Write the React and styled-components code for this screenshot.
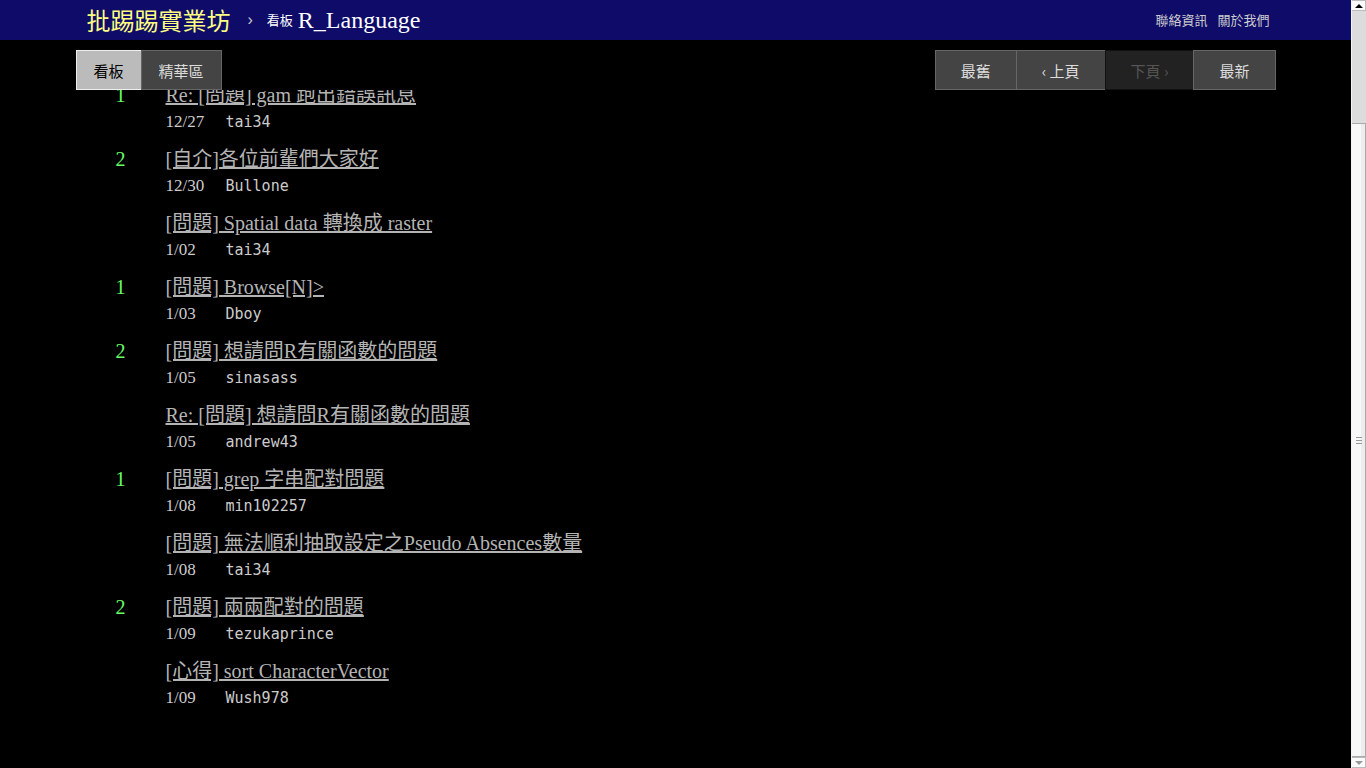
import React from "react";
import styled, { createGlobalStyle } from "styled-components";

const GlobalStyle = createGlobalStyle`
  body {
    margin: 0 15px 0 0;
    background: #000;
    color: #ccc;
    font-family: "Liberation Serif", "Noto Sans CJK TC", serif;
  }
`;

const TopbarContainer = styled.div`
  position: fixed;
  top: 0;
  left: 0;
  right: 15px;
  height: 40px;
  background: #0e0b69;
  z-index: 10;
`;

const Topbar = styled.div`
  max-width: 1200px;
  margin: 0 auto;
  height: 40px;
  padding: 0 6px 0 11px;
  box-sizing: border-box;
  display: flex;
  align-items: center;
  line-height: 40px;
`;

const Logo = styled.a`
  font-family: "Noto Sans CJK TC", sans-serif;
  font-size: 24px;
  color: #ffff80;
  text-decoration: none;
`;

const Sep = styled.span`
  color: #ccc;
  font-family: "Liberation Sans", sans-serif;
  font-size: 16px;
  margin: 0 14px 0 17px;
`;

const BoardLabel = styled.span`
  font-family: "Noto Sans CJK TC", sans-serif;
  font-size: 13px;
  color: #fff;
  margin-right: 5px;
`;

const BoardName = styled.a`
  font-family: "Liberation Serif", serif;
  font-size: 24px;
  color: #fff;
  text-decoration: none;
`;

const RightLinks = styled.div`
  margin-left: auto;
  display: flex;
  gap: 10px;
`;

const TopLink = styled.a`
  font-family: "Noto Sans CJK TC", sans-serif;
  font-size: 13px;
  color: #ccc;
  text-decoration: none;
`;

const ActionBarContainer = styled.div`
  position: fixed;
  top: 40px;
  left: 0;
  right: 15px;
  height: 50px;
  background: #000;
  z-index: 9;
`;

const ActionBar = styled.div`
  max-width: 1200px;
  margin: 0 auto;
  padding-top: 10px;
  display: flex;
  justify-content: space-between;
`;

const BtnGroup = styled.div`
  display: flex;
`;

const Btn = styled.a`
  display: flex;
  align-items: center;
  justify-content: center;
  height: 40px;
  box-sizing: border-box;
  padding: 0 ${({ $pad }) => $pad}px;
  font-family: "Noto Sans CJK TC", sans-serif;
  font-size: 15px;
  white-space: nowrap;
  border: 1px solid
    ${({ $state }) =>
      $state === "selected" ? "#eee" : $state === "disabled" ? "#111" : "#666"};
  background: ${({ $state }) =>
    $state === "selected" ? "#bbb" : $state === "disabled" ? "#222" : "#444"};
  color: ${({ $state }) =>
    $state === "selected" ? "#000" : $state === "disabled" ? "#555" : "#ddd"};
  & + & {
    margin-left: -1px;
  }
`;

const Main = styled.div`
  max-width: 1200px;
  margin: 0 auto;
  padding-top: 83px;
`;

const Row = styled.div`
  display: grid;
  grid-template-columns: 90px 1fr;
  padding-bottom: 14px;
`;

const Nrec = styled.div`
  font-size: 20px;
  line-height: 24px;
  text-align: center;
  color: #66ff66;
`;

const Title = styled.a`
  justify-self: start;
  font-size: 20px;
  line-height: 24px;
  color: #b4b4b4;
  text-decoration: underline;
`;

const Meta = styled.div`
  grid-column: 2;
  display: flex;
  margin-top: 4px;
  line-height: 22px;
`;

const Date = styled.span`
  width: 60px;
  font-size: 17px;
  color: #ccc;
`;

const Author = styled.span`
  font-family: "DejaVu Sans Mono", monospace;
  font-size: 15px;
  color: #ccc;
`;

/* the window's scrollbar, scrolled down to the end of the list */
const ScrollRail = styled.div`
  position: fixed;
  top: 0;
  right: 0;
  bottom: 0;
  width: 15px;
  box-sizing: border-box;
  border-left: 1px solid #f4f4f4;
  background: #dcdcdc;
  display: flex;
  flex-direction: column;
  z-index: 20;
`;

const ArrowBtn = styled.div`
  height: 11px;
  flex: none;
  background: #fafafa;
  border: 1px solid #bbb;
  border-left: none;
  box-sizing: border-box;
  display: flex;
  align-items: center;
  justify-content: center;
  &::after {
    content: "";
    border-left: 4px solid transparent;
    border-right: 4px solid transparent;
    ${({ $dir }) =>
      $dir === "up"
        ? "border-bottom: 4px solid #000;"
        : "border-top: 4px solid #999;"}
  }
`;

const TrackGap = styled.div`
  height: 112px;
  flex: none;
`;

const Thumb = styled.div`
  flex: 1;
  background: linear-gradient(to right, #f8f8f8 70%, #ececec 70%);
  border: 1px solid #aaa;
  border-left: none;
  display: flex;
  flex-direction: column;
  align-items: center;
  justify-content: center;
  gap: 2px;
`;

const Grip = styled.span`
  width: 6px;
  height: 1px;
  background: #999;
`;

const posts = [
  { n: "1", t: "Re: [問題] gam 跑出錯誤訊息", d: "12/27", a: "tai34" },
  { n: "2", t: "[自介]各位前輩們大家好", d: "12/30", a: "Bullone" },
  { n: "", t: "[問題] Spatial data 轉換成 raster", d: "1/02", a: "tai34" },
  { n: "1", t: "[問題] Browse[N]>", d: "1/03", a: "Dboy" },
  { n: "2", t: "[問題] 想請問R有關函數的問題", d: "1/05", a: "sinasass" },
  { n: "", t: "Re: [問題] 想請問R有關函數的問題", d: "1/05", a: "andrew43" },
  { n: "1", t: "[問題] grep 字串配對問題", d: "1/08", a: "min102257" },
  { n: "", t: "[問題] 無法順利抽取設定之Pseudo Absences數量", d: "1/08", a: "tai34" },
  { n: "2", t: "[問題] 兩兩配對的問題", d: "1/09", a: "tezukaprince" },
  { n: "", t: "[心得] sort CharacterVector", d: "1/09", a: "Wush978" },
];

export default function App() {
  return (
    <>
      <GlobalStyle />
      <TopbarContainer>
        <Topbar>
          <Logo>批踢踢實業坊</Logo>
          <Sep>›</Sep>
          <BoardLabel>看板</BoardLabel>
          <BoardName>R_Language</BoardName>
          <RightLinks>
            <TopLink>聯絡資訊</TopLink>
            <TopLink>關於我們</TopLink>
          </RightLinks>
        </Topbar>
      </TopbarContainer>
      <ActionBarContainer>
        <ActionBar>
          <BtnGroup>
            <Btn $pad={17} $state="selected">看板</Btn>
            <Btn $pad={17}>精華區</Btn>
          </BtnGroup>
          <BtnGroup>
            <Btn $pad={25}>最舊</Btn>
            <Btn $pad={25}>‹ 上頁</Btn>
            <Btn $pad={25} $state="disabled">下頁 ›</Btn>
            <Btn $pad={25}>最新</Btn>
          </BtnGroup>
        </ActionBar>
      </ActionBarContainer>
      <Main>
        {posts.map((p, i) => (
          <Row key={i}>
            <Nrec>{p.n}</Nrec>
            <Title>{p.t}</Title>
            <Meta>
              <Date>{p.d}</Date>
              <Author>{p.a}</Author>
            </Meta>
          </Row>
        ))}
      </Main>
      <ScrollRail>
        <ArrowBtn $dir="up" />
        <TrackGap />
        <Thumb>
          <Grip />
          <Grip />
          <Grip />
        </Thumb>
        <ArrowBtn $dir="down" />
      </ScrollRail>
    </>
  );
}
